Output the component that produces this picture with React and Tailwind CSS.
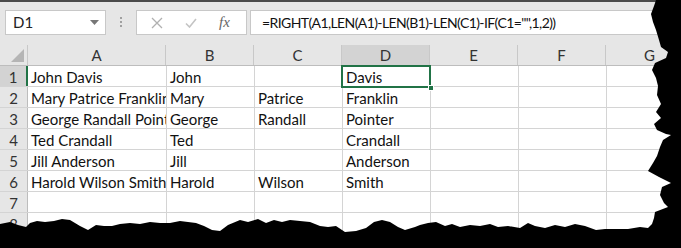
import React from 'react';

const rows = [
  ['John Davis', 'John', '', 'Davis'],
  ['Mary Patrice Franklin', 'Mary', 'Patrice', 'Franklin'],
  ['George Randall Pointer', 'George', 'Randall', 'Pointer'],
  ['Ted Crandall', 'Ted', '', 'Crandall'],
  ['Jill Anderson', 'Jill', '', 'Anderson'],
  ['Harold Wilson Smith', 'Harold', 'Wilson', 'Smith'],
  ['', '', '', ''],
  ['', '', '', ''],
];

const cols = ['A', 'B', 'C', 'D', 'E', 'F', 'G'];
const widths = ['w-[138px]', 'w-[88px]', 'w-[88px]', 'w-[88px]', 'w-[88px]', 'w-[88px]', 'w-[88px]'];

const torn =
  '656,0 654,6 651,14 653,22 656,30 659,40 661,47 668,52 666,58 655,63 652,70 656,78 658,86 657,95 661,104 656,112 661,118 654,124 657,130 666,134 671,135 663,140 660,147 657,156 653,163 648,171 659,177 671,183 662,187 660,195 664,203 668,207 655,212 654,218 652,224 648,228 ' +
  '640,227 628,229 615,229 605,229 596,230 585,226 575,224 565,227 555,225 545,228 535,226 528,223 520,228 508,226 498,227 490,224 480,226 470,225 460,227 452,224 445,226 436,222 428,223 420,225 415,227 405,230 398,227 390,222 382,220 374,222 366,228 356,231 345,232 336,226 328,227 320,226 310,222 300,221 290,220 282,222 274,220 266,223 258,219 248,222 240,220 228,225 220,231 212,230 204,226 196,223 188,222 180,221 170,223 160,223 150,222 140,224 130,223 120,224 112,226 104,226 96,225 88,230 80,226 70,220 62,219 54,221 45,222 37,221 30,223 26,227 18,225 10,222 0,224 ' +
  '0,248 681,248 681,0';

export default function App() {
  return (
    <div className="relative w-[681px] h-[248px] overflow-hidden bg-white font-['Lato',sans-serif] text-[15px] text-[#111]">
      {/* formula bar */}
      <div className="flex items-start h-[45px] bg-[#e6e6e6] border-t-2 border-[#4a4a4a]">
        <div className="ml-[5px] mt-[8px] flex items-center justify-between w-[101px] h-[25px] bg-white border border-[#c8c8c8] pl-[7px] pr-[6px]">
          <span className="text-[#222]">D1</span>
          <svg width="9" height="5" viewBox="0 0 9 5"><path d="M0 0h9L4.5 5z" fill="#777" /></svg>
        </div>
        <div className="ml-[14px] mt-[15px] flex flex-col gap-[2px]">
          <span className="w-[2px] h-[2px] bg-[#a0a0a0]" />
          <span className="w-[2px] h-[2px] bg-[#a0a0a0]" />
          <span className="w-[2px] h-[2px] bg-[#a0a0a0]" />
        </div>
        <div className="ml-[14px] mt-[8px] flex items-center w-[111px] h-[25px] bg-white border border-[#c8c8c8] pl-[14px]">
          <svg width="12" height="12" viewBox="0 0 12 12"><path d="M1 1l10 10M11 1l-10 10" stroke="#b0b0b0" strokeWidth="1.3" /></svg>
          <svg className="ml-[22px]" width="12" height="10" viewBox="0 0 12 10"><path d="M1 5.5l3.5 3.5L11 1" stroke="#c4c4c4" strokeWidth="1.6" fill="none" /></svg>
          <span className="ml-[22px] font-['Liberation_Serif',serif] italic text-[15px] text-[#666]">fx</span>
        </div>
        <div className="ml-[3px] mt-[8px] flex items-center flex-1 h-[25px] bg-white border border-[#c8c8c8] pl-[11px] whitespace-nowrap text-[14px] tracking-[-0.6px]">
          =RIGHT(A1,LEN(A1)-LEN(B1)-LEN(C1)-IF(C1="",1,2))
        </div>
      </div>

      {/* column headers */}
      <div className="flex h-[21px] bg-[#e6e6e6] border-b border-[#bdbdbd]">
        <div className="relative w-[28px] shrink-0 border-r border-[#c8c8c8]">
          <svg className="absolute right-[3px] bottom-[3px]" width="13" height="13" viewBox="0 0 13 13"><path d="M13 0v13H0z" fill="#b5b5b5" /></svg>
        </div>
        {cols.map((c, i) => (
          <div
            key={c}
            className={`${widths[i]} shrink-0 flex items-center justify-center border-r border-[#c8c8c8] text-[#333] ${c === 'D' ? 'bg-[#d3d3d3]' : ''}`}
          >
            {c}
          </div>
        ))}
      </div>

      {/* rows */}
      {rows.map((r, ri) => (
        <div key={ri} className="flex h-[21px] border-b border-[#d4d4d4]">
          <div
            className={`w-[28px] shrink-0 flex items-center justify-center pt-[2px] text-[#333] ${ri === 0 ? 'bg-[#d3d3d3] border-r-2 border-[#217346]' : 'bg-[#e6e6e6] border-r border-[#bdbdbd]'}`}
          >
            {ri + 1}
          </div>
          {cols.map((c, ci) => (
            <div
              key={c}
              className={`${widths[ci]} shrink-0 flex items-center pl-[3px] pt-[2px] whitespace-nowrap overflow-hidden ${ci === 0 ? '' : 'border-l border-[#d4d4d4]'}`}
            >
              {r[ci] || ''}
            </div>
          ))}
        </div>
      ))}

      {/* active cell D1 */}
      <div className="absolute left-[341px] top-[65px] w-[90px] h-[23px] border-2 border-[#217346]" />
      <div className="absolute left-[428px] top-[85px] w-[6px] h-[6px] bg-[#217346] border border-white" />

      {/* torn edge */}
      <svg className="absolute inset-0" width="681" height="248" viewBox="0 0 681 248">
        <polygon points={torn} fill="#000" />
      </svg>
    </div>
  );
}
